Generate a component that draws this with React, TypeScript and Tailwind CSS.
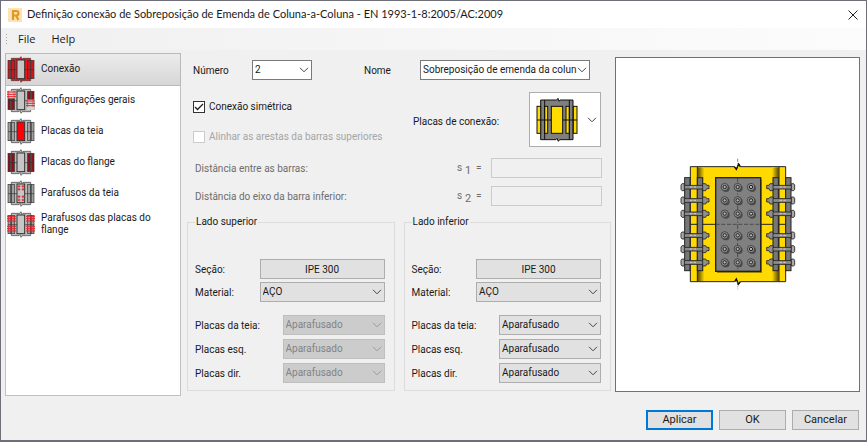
import React, { useState } from 'react';

const sections = [
  { id: 'connection', label: 'Conexão' },
  { id: 'general', label: 'Configurações gerais' },
  { id: 'webPlates', label: 'Placas da teia' },
  { id: 'flangePlates', label: 'Placas do flange' },
  { id: 'webBolts', label: 'Parafusos da teia' },
  { id: 'flangeBolts', label: 'Parafusos das placas do flange' },
];

const BoltLines = ({ x, ys }: { x: number; ys: number[] }) => (
  <g stroke="#e3262e" strokeWidth="3">
    {ys.map(y => (
      <path key={y} d={`M${x} ${y}h27`} />
    ))}
    <path
      d={`M${x + 5} ${ys[0] - 4}V${ys[ys.length - 1] + 4}M${x + 21} ${ys[0] - 4}V${ys[ys.length - 1] + 4}`}
      strokeWidth="2"
    />
  </g>
);

const SectionIcon = ({ id }: { id: string }) => {
  const all = id === 'connection';
  const dark = id === 'flangePlates' || id === 'general';
  const plateColor = all ? '#d3151b' : dark ? '#8d1119' : '#a0a0a0';

  return (
    <svg viewBox="0 0 84 81" className="h-[27px] w-7 shrink-0">
      <path
        d="M13 7h25l4-5 3 8 3-3h23v67H46l-4 5-3-8-3 3H13z"
        fill={all ? '#ee141a' : '#bcbcbc'}
        stroke="#3a3a3a"
        strokeWidth="2"
      />
      {[3, 14, 62, 73].map(x => (
        <rect key={x} x={x} y="13" width="8" height="55" fill={plateColor} stroke="#333" strokeWidth="2" />
      ))}
      <path d="M3 41h27M54 41h27" stroke="#333" strokeWidth="2" />
      <rect
        x="30"
        y="12"
        width="23"
        height="56"
        fill={id === 'webPlates' ? '#fb0007' : '#c6c6c6'}
        stroke="#333"
        strokeWidth="3"
      />
      {id === 'general' && (
        <>
          <rect x="2" y="12" width="22" height="22" fill="#e4d6d6" />
          <rect x="60" y="38" width="22" height="31" fill="#d2d2d2" />
          <BoltLines x={0} ys={[15, 22, 29]} />
          <BoltLines x={57} ys={[42, 49, 56]} />
        </>
      )}
      {id === 'webBolts' &&
        [19, 28, 50, 60].map(y => (
          <path
            key={y}
            d={`M32 ${y}h8M44 ${y}h8M36 ${y - 4}v8M48 ${y - 4}v8`}
            stroke="#e3262e"
            strokeWidth="3"
          />
        ))}
      {id === 'flangeBolts' && (
        <>
          <BoltLines x={0} ys={[16, 23, 30]} />
          <BoltLines x={0} ys={[46, 53, 60]} />
          <BoltLines x={57} ys={[16, 23, 30]} />
          <BoltLines x={57} ys={[46, 53, 60]} />
        </>
      )}
    </svg>
  );
};

const PlatesIcon = () => (
  <svg viewBox="0 0 126 132" className="h-11 w-[42px]">
    <g stroke="#111" strokeWidth="3">
      <path d="M14 6h48l4-5 3 9 3-4h39v119H71l-4 5-4-9-3 4H14z" fill="#7f7f7f" />
      <rect x="3" y="25" width="11" height="81" fill="#ffdb00" />
      <rect x="26" y="25" width="9" height="81" fill="#ffdb00" />
      <rect x="90" y="25" width="10" height="81" fill="#ffdb00" />
      <rect x="112" y="25" width="11" height="81" fill="#ffdb00" />
      <rect x="46" y="25" width="34" height="81" fill="#ffdb00" />
      <path d="M26 6v119M100 6v119M3 66h43M80 66h43" fill="none" />
    </g>
  </svg>
);

const boltRows = [111, 151, 191, 256, 297, 337];
const boltColumns = [164, 203, 243];

const SidePlates = () => (
  <g>
    <rect x="44" y="83" width="16" height="279" fill="#777" stroke="#222" strokeWidth="3" />
    <rect x="82" y="83" width="16" height="279" fill="#777" stroke="#222" strokeWidth="3" />
    {boltRows.map(y => (
      <g key={y} stroke="#222" strokeWidth="2.5">
        <rect x="42" y={y - 5} width="58" height="11" fill="#8c8c8c" />
        <path d={`M36 ${y - 10}h7v21h-7l-3-4v-13z`} fill="#aaa" />
        <path d={`M98 ${y - 10}h9l3 5h7v10h-7l-3 6h-9z`} fill="#8f8f8f" />
        <path d={`M60 ${y}h22`} stroke="#e0e0e0" strokeDasharray="7 4" />
      </g>
    ))}
  </g>
);

const ConnectionDrawing = () => (
  <svg viewBox="0 0 405 450" className="h-[150px] w-[135px]" role="img" aria-label="Conexão">
    <defs>
      <linearGradient id="fillet">
        <stop offset="0" stopColor="#5b4c00" />
        <stop offset="1" stopColor="#ffd900" />
      </linearGradient>
      <linearGradient id="filletRight">
        <stop offset="0" stopColor="#ffd900" />
        <stop offset="1" stopColor="#5b4c00" />
      </linearGradient>
    </defs>
    <path
      d="M61 50h132l6 8 7-16 5 8h136v345H211l-6 8-6-16-5 8H61z"
      fill="#ffd900"
      stroke="#222"
      strokeWidth="3"
    />
    <rect x="83" y="52" width="20" height="341" fill="url(#fillet)" />
    <rect x="306" y="52" width="20" height="341" fill="url(#filletRight)" />
    <path d="M82 50v345M327 50v345M61 223h75M272 223h75" stroke="#222" strokeWidth="3" />
    <path d="M193 50l6 8 7-16 5 8M194 395l5-8 6 16 6-8" fill="none" stroke="#111" strokeWidth="4" />
    <path d="M203 26v24M203 395v23" stroke="#555" strokeWidth="2" strokeDasharray="10 4 3 4" />
    <rect x="141" y="88" width="135" height="281" fill="#5e5000" opacity="0.6" />
    <rect x="137" y="83" width="135" height="281" fill="#808080" stroke="#222" strokeWidth="4" />
    <path d="M137 223h135" stroke="#333" strokeWidth="2" strokeDasharray="12 5" />
    <path d="M203 83v281" stroke="#333" strokeWidth="2" strokeDasharray="14 5 4 5" />
    {boltRows.map(y =>
      boltColumns.map(x => (
        <g key={`${x}-${y}`}>
          <circle cx={x + 4} cy={y + 4} r="11" fill="#4c4c4c" />
          <circle cx={x} cy={y} r="11" fill="#8d8d8d" stroke="#2b2b2b" strokeWidth="2" />
          <circle cx={x} cy={y} r="5" fill="#b5b5b5" stroke="#222" strokeWidth="3" />
        </g>
      ))
    )}
    <SidePlates />
    <g transform="translate(407 0) scale(-1 1)">
      <SidePlates />
    </g>
  </svg>
);

const Chevron = ({ className = '' }: { className?: string }) => (
  <svg
    viewBox="0 0 10 6"
    className={`pointer-events-none h-[6px] w-[10px] ${className}`}
    fill="none"
    stroke="currentColor"
  >
    <path d="M1 .8l4 4 4-4" />
  </svg>
);

interface SelectFieldProps {
  id: string;
  value: string;
  white?: boolean;
  disabled?: boolean;
  className?: string;
}

const SelectField: React.FC<SelectFieldProps> = ({ id, value, white, disabled, className = '' }) => (
  <div className={`grid items-center ${className}`}>
    <select
      id={id}
      disabled={disabled}
      className={`col-start-1 row-start-1 h-5 w-full appearance-none border pr-3 pl-[2px] leading-[18px] disabled:opacity-100 ${
        white
          ? 'border-[#7a7a7a] bg-white'
          : disabled
            ? 'border-[#bfbfbf] bg-[#cccccc] text-[#838383]'
            : 'border-[#adadad] bg-[#e1e1e1]'
      }`}
    >
      <option>{value}</option>
    </select>
    <Chevron
      className={`col-start-1 row-start-1 mr-[3px] justify-self-end ${disabled ? 'text-[#9a9a9a]' : 'text-[#444]'}`}
    />
  </div>
);

interface SideGroupProps {
  id: string;
  title: string;
  disabled?: boolean;
}

const SideGroup: React.FC<SideGroupProps> = ({ id, title, disabled }) => (
  <fieldset className="min-w-0 flex-1 border border-[#dcdcdc] pr-[9px] pb-[7px] pl-[7px]">
    <legend className="px-px leading-4">{title}</legend>
    <div className="mt-[29px] flex items-center justify-between">
      <span>Seção:</span>
      <button type="button" className="h-5 w-[125px] border border-[#adadad] bg-[#e1e1e1]">
        IPE 300
      </button>
    </div>
    <div className="mt-[3px] flex items-center justify-between">
      <label htmlFor={`${id}-material`}>Material:</label>
      <SelectField id={`${id}-material`} value="AÇO" className="w-[125px]" />
    </div>
    <div className="mt-[13px] flex flex-col gap-1">
      {['Placas da teia:', 'Placas esq.', 'Placas dir.'].map((label, i) => (
        <div key={label} className="flex items-center justify-between">
          <label htmlFor={`${id}-plate-${i}`}>{label}</label>
          <SelectField id={`${id}-plate-${i}`} value="Aparafusado" disabled={disabled} className="w-[102px]" />
        </div>
      ))}
    </div>
  </fieldset>
);

const App: React.FC = () => {
  const [active, setActive] = useState('connection');
  const [symmetric, setSymmetric] = useState(true);

  return (
    <div className="flex min-h-screen flex-col border border-b-2 border-[#6f6f79] bg-[#f0f0f0] font-['Roboto',sans-serif] text-[10px] text-[#1a1a1a]">
      <header className="flex h-[27px] items-center bg-white pr-2 pl-[7px] font-['Lato',sans-serif] text-[11px]">
        <svg viewBox="0 0 14 14" className="h-[14px] w-[14px]">
          <rect width="14" height="14" fill="#fbe3b8" />
          <path d="M5 12V3h3.200a2 2 0 0 1 0 4.500H5M8 7.500l2.500 4.500" fill="none" stroke="#e39a1c" strokeWidth="2.200" />
        </svg>
        <h1 className="ml-[5px] flex-1 whitespace-nowrap">
          Definição conexão de Sobreposição de Emenda de Coluna-a-Coluna - EN 1993-1-8:2005/AC:2009
        </h1>
        <button type="button" aria-label="Fechar">
          <svg viewBox="0 0 10 10" className="h-[10px] w-[10px]" stroke="#222">
            <path d="M.5 .5l9 9M9.500 .5l-9 9" />
          </svg>
        </button>
      </header>

      <nav className="flex h-[22px] items-center bg-linear-to-r from-[#f0f0f0] to-[#fcfcfc] pl-[5px] font-['Open_Sans',sans-serif] text-[11px]">
        <svg viewBox="0 0 2 10" className="h-[10px] w-[2px]" fill="#aaa">
          <path d="M0 0h1v1H0zM0 3h1v1H0zM0 6h1v1H0zM0 9h1v1H0z" />
        </svg>
        <button type="button" className="ml-[10px]">
          File
        </button>
        <button type="button" className="ml-4">
          Help
        </button>
      </nav>

      <main className="flex flex-1 pr-[6px] pl-1">
        <ul className="mt-[3px] w-[176px] shrink-0 self-start border border-[#c0c0c0] bg-white pb-[155px]">
          {sections.map(section => (
            <li key={section.id}>
              <button
                type="button"
                onClick={() => setActive(section.id)}
                className={`flex h-[31px] w-full items-center gap-[6px] pb-px pl-px text-left leading-3 ${
                  active === section.id
                    ? 'bg-linear-to-b from-[#ececec] to-[#d6d6d6] outline-1 outline-[#b9b9b9]'
                    : ''
                }`}
              >
                <SectionIcon id={section.id} />
                <span className="max-w-[116px]">{section.label}</span>
              </button>
            </li>
          ))}
        </ul>

        <form className="ml-[6px] w-[424px] shrink-0 pt-[10px]">
          <div className="flex items-center pl-[6px]">
            <label htmlFor="number" className="w-[59px]">
              Número
            </label>
            <SelectField id="number" value="2" white className="w-[60px]" />
            <label htmlFor="name" className="ml-[52px] w-14">
              Nome
            </label>
            <SelectField id="name" value="Sobreposição de emenda da colun" white className="w-[170px]" />
          </div>

          <div className="mt-3 flex pr-[10px] pl-[6px]">
            <div className="flex w-[220px] flex-col gap-[14px] pt-[7px]">
              <label className="flex items-center gap-1 leading-4">
                <span className="grid items-center justify-items-center">
                  <input
                    type="checkbox"
                    checked={symmetric}
                    onChange={e => setSymmetric(e.target.checked)}
                    className="col-start-1 row-start-1 h-3 w-3 appearance-none border border-[#333] bg-white"
                  />
                  {symmetric && (
                    <svg
                      viewBox="0 0 10 8"
                      className="pointer-events-none col-start-1 row-start-1 h-2 w-[10px]"
                      fill="none"
                      stroke="#222"
                      strokeWidth="1.300"
                    >
                      <path d="M1 4l2.500 2.500L9 1" />
                    </svg>
                  )}
                </span>
                Conexão simétrica
              </label>
              <label className="flex items-center gap-1 leading-4 whitespace-nowrap text-[#a5a5a5]">
                <input type="checkbox" disabled className="h-3 w-3 appearance-none border border-[#cccccc] bg-white" />
                Alinhar as arestas da barras superiores
              </label>
            </div>
            <span className="flex-1 self-center pt-1">Placas de conexão:</span>
            <button
              type="button"
              aria-label="Placas de conexão"
              className="flex h-[55px] w-[72px] items-center justify-between border border-[#adadad] bg-white pr-[3px] pl-[6px]"
            >
              <PlatesIcon />
              <Chevron className="text-[#444]" />
            </button>
          </div>

          <div className="mt-[11px] flex flex-col gap-2 pr-[9px] pl-2 text-[#6d6d6d]">
            {['Distância entre as barras:', 'Distância do eixo da barra inferior:'].map((label, i) => (
              <div key={label} className="flex items-center">
                <label htmlFor={`distance-${i}`} className="flex-1">
                  {label}
                </label>
                <span className="w-[34px] leading-4 whitespace-pre">
                  s<sub className="text-[11px]"> {i + 1}</sub>
                  {'  ='}
                </span>
                <input
                  id={`distance-${i}`}
                  type="text"
                  disabled
                  className="h-5 w-[111px] border border-[#cccccc] bg-[#f0f0f0]"
                />
              </div>
            ))}
          </div>

          <div className="mt-2 flex gap-[9px]">
            <SideGroup id="upper" title="Lado superior" disabled />
            <SideGroup id="lower" title="Lado inferior" />
          </div>
        </form>

        <section className="mt-[7px] ml-1 flex h-[335px] min-w-0 flex-1 items-center justify-center border border-[#70707a] bg-white">
          <ConnectionDrawing />
        </section>
      </main>

      <footer className="flex justify-end gap-[6px] pt-2 pr-[7px] pb-[10px] text-[11px]">
        <button type="button" className="h-5 w-[67px] border-2 border-[#0078d7] bg-[#e1e1e1]">
          Aplicar
        </button>
        <button type="button" className="h-5 w-[67px] border border-[#adadad] bg-[#e1e1e1]">
          OK
        </button>
        <button type="button" className="h-5 w-[67px] border border-[#adadad] bg-[#e1e1e1]">
          Cancelar
        </button>
      </footer>
    </div>
  );
};

export default App;
